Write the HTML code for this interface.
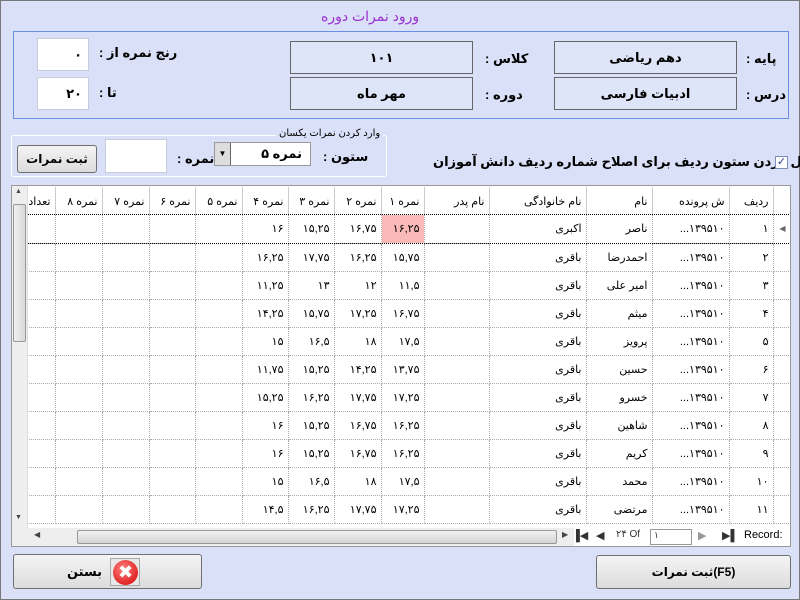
<!DOCTYPE html>
<html><head><meta charset="utf-8"><style>
*{box-sizing:border-box;margin:0;padding:0}
body{width:800px;height:600px;background:#d9e0f7;position:relative;overflow:hidden;font-family:"Liberation Sans","DejaVu Sans","Noto Sans CJK SC",sans-serif;border:1px solid #777}
.a{position:absolute}
.b{font-weight:bold;font-size:13px;color:#000}
.box{position:absolute;background:#dfe5f8;border:1px solid #666;display:flex;align-items:center;justify-content:center;font-weight:bold;font-size:13px}
.inp{position:absolute;background:#fff;border:1px solid #c8ccd8;display:flex;align-items:center;justify-content:flex-end;padding-right:6px;font-weight:bold;font-size:13px}
.lbl{position:absolute;font-weight:bold;font-size:13px;direction:rtl;white-space:nowrap}
table{border-collapse:collapse;table-layout:fixed;font-size:11px}
td{border-right:1px dotted #aaa;border-bottom:1px dotted #aaa;height:28px;text-align:right;padding-right:4px;white-space:nowrap;overflow:hidden;direction:rtl}
th{height:28px;font-weight:normal;text-align:right;padding-right:4px;border-right:1px solid #ccc;background:#fff;white-space:nowrap;overflow:hidden;direction:rtl;font-size:11px}
.btn{position:absolute;background:linear-gradient(#f4f4f4,#dcdcdc);border:1px solid #707070;border-radius:3px;display:flex;align-items:center;justify-content:center;font-weight:bold;font-size:12px}
</style></head><body>
<div class="a" style="left:320px;top:7px;color:#9b30d0;font-size:14px;direction:rtl">ورود نمرات دوره</div>
<div class="a" style="left:12px;top:30px;width:776px;height:88px;border:1px solid #6b8fe0"></div>
<div class="lbl" style="left:745px;top:50px">پایه :</div>
<div class="lbl" style="left:745px;top:86px">درس :</div>
<div class="box" style="left:553px;top:40px;width:183px;height:33px">دهم ریاضی</div>
<div class="box" style="left:553px;top:76px;width:183px;height:33px">ادبیات فارسی</div>
<div class="lbl" style="left:484px;top:50px">کلاس :</div>
<div class="lbl" style="left:484px;top:86px">دوره :</div>
<div class="box" style="left:289px;top:40px;width:183px;height:33px">۱۰۱</div>
<div class="box" style="left:289px;top:76px;width:183px;height:33px">مهر ماه</div>
<div class="lbl" style="left:98px;top:44px">رنج نمره از :</div>
<div class="lbl" style="left:98px;top:84px">تا :</div>
<div class="inp" style="left:36px;top:37px;width:52px;height:33px">۰</div>
<div class="inp" style="left:36px;top:76px;width:52px;height:33px">۲۰</div>

<div class="a" style="left:10px;top:134px;width:376px;height:42px;border:1px solid #fff;border-radius:3px"></div>
<div class="a" style="left:275px;top:127px;background:#d9e0f7;padding:0 3px;font-size:10px;direction:rtl">وارد کردن نمرات یکسان</div>
<div class="btn" style="left:16px;top:144px;width:80px;height:28px">ثبت نمرات</div>
<div class="inp" style="left:104px;top:138px;width:62px;height:34px"></div>
<div class="lbl" style="left:176px;top:150px">نمره :</div>
<div class="a" style="left:213px;top:141px;width:97px;height:24px;background:#fff;border:1px solid #999;font-weight:bold;font-size:13px;direction:rtl;padding-right:8px;line-height:22px">نمره ۵</div>
<div class="a" style="left:214px;top:142px;width:16px;height:22px;background:#ddd;border-right:1px solid #666;font-size:8px;text-align:center;line-height:22px">▼</div>
<div class="lbl" style="left:322px;top:148px">ستون :</div>
<div class="lbl" style="left:432px;top:153px">فعال کردن ستون ردیف برای اصلاح شماره ردیف دانش آموزان</div>
<div class="a" style="left:774px;top:155px;width:13px;height:13px;background:#fff;border:1px solid #7a8fb5;font-size:11px;line-height:11px;text-align:center;color:#2a3a8a">✓</div>

<div class="a" style="left:10px;top:184px;width:780px;height:362px;background:#fff;border:1px solid #999;overflow:hidden">
<table class="a" style="left:15px;top:1px;width:763px">
<colgroup><col style="width:28px"><col style="width:47px"><col style="width:47px"><col style="width:46px"><col style="width:47px"><col style="width:46px"><col style="width:46px"><col style="width:47px"><col style="width:43px"><col style="width:65px"><col style="width:97px"><col style="width:66px"><col style="width:77px"><col style="width:44px"><col style="width:17px"></colgroup>
<tr><th>تعداد</th><th>نمره ۸</th><th>نمره ۷</th><th>نمره ۶</th><th>نمره ۵</th><th>نمره ۴</th><th>نمره ۳</th><th>نمره ۲</th><th>نمره ۱</th><th>نام پدر</th><th>نام خانوادگی</th><th>نام</th><th>ش پرونده</th><th>ردیف</th><th style="border:none"></th></tr>
<tr style="outline:1px dotted #000"><td></td><td></td><td></td><td></td><td></td><td>۱۶</td><td>۱۵,۲۵</td><td>۱۶,۷۵</td><td style="background:#f9b9b9">۱۶,۲۵</td><td></td><td>اکبری</td><td>ناصر</td><td>۱۳۹۵۱۰...</td><td>۱</td><td style="font-size:8px;color:#666">◀</td></tr>
<tr><td></td><td></td><td></td><td></td><td></td><td>۱۶,۲۵</td><td>۱۷,۷۵</td><td>۱۶,۲۵</td><td>۱۵,۷۵</td><td></td><td>باقری</td><td>احمدرضا</td><td>۱۳۹۵۱۰...</td><td>۲</td><td></td></tr>
<tr><td></td><td></td><td></td><td></td><td></td><td>۱۱,۲۵</td><td>۱۳</td><td>۱۲</td><td>۱۱,۵</td><td></td><td>باقری</td><td>امیر علی</td><td>۱۳۹۵۱۰...</td><td>۳</td><td></td></tr>
<tr><td></td><td></td><td></td><td></td><td></td><td>۱۴,۲۵</td><td>۱۵,۷۵</td><td>۱۷,۲۵</td><td>۱۶,۷۵</td><td></td><td>باقری</td><td>میثم</td><td>۱۳۹۵۱۰...</td><td>۴</td><td></td></tr>
<tr><td></td><td></td><td></td><td></td><td></td><td>۱۵</td><td>۱۶,۵</td><td>۱۸</td><td>۱۷,۵</td><td></td><td>باقری</td><td>پرویز</td><td>۱۳۹۵۱۰...</td><td>۵</td><td></td></tr>
<tr><td></td><td></td><td></td><td></td><td></td><td>۱۱,۷۵</td><td>۱۵,۲۵</td><td>۱۴,۲۵</td><td>۱۳,۷۵</td><td></td><td>باقری</td><td>حسین</td><td>۱۳۹۵۱۰...</td><td>۶</td><td></td></tr>
<tr><td></td><td></td><td></td><td></td><td></td><td>۱۵,۲۵</td><td>۱۶,۲۵</td><td>۱۷,۷۵</td><td>۱۷,۲۵</td><td></td><td>باقری</td><td>خسرو</td><td>۱۳۹۵۱۰...</td><td>۷</td><td></td></tr>
<tr><td></td><td></td><td></td><td></td><td></td><td>۱۶</td><td>۱۵,۲۵</td><td>۱۶,۷۵</td><td>۱۶,۲۵</td><td></td><td>باقری</td><td>شاهین</td><td>۱۳۹۵۱۰...</td><td>۸</td><td></td></tr>
<tr><td></td><td></td><td></td><td></td><td></td><td>۱۶</td><td>۱۵,۲۵</td><td>۱۶,۷۵</td><td>۱۶,۲۵</td><td></td><td>باقری</td><td>کریم</td><td>۱۳۹۵۱۰...</td><td>۹</td><td></td></tr>
<tr><td></td><td></td><td></td><td></td><td></td><td>۱۵</td><td>۱۶,۵</td><td>۱۸</td><td>۱۷,۵</td><td></td><td>باقری</td><td>محمد</td><td>۱۳۹۵۱۰...</td><td>۱۰</td><td></td></tr>
<tr><td></td><td></td><td></td><td></td><td></td><td>۱۴,۵</td><td>۱۶,۲۵</td><td>۱۷,۷۵</td><td>۱۷,۲۵</td><td></td><td>باقری</td><td>مرتضی</td><td>۱۳۹۵۱۰...</td><td>۱۱</td><td></td></tr>
</table>
<div class="a" style="left:0;top:0;width:16px;height:342px;background:#eee;border-right:1px solid #ddd"></div>
<div class="a" style="left:1px;top:18px;width:13px;height:138px;background:linear-gradient(90deg,#f0f0f0,#d8d8d8);border:1px solid #999;border-radius:2px"></div>
<div class="a" style="left:3px;top:2px;font-size:7px;color:#444">▲</div>
<div class="a" style="left:3px;top:328px;font-size:7px;color:#444">▼</div>
<div class="a" style="left:0;top:342px;width:562px;height:18px;background:#eee"></div>
<div class="a" style="left:65px;top:344px;width:480px;height:14px;background:linear-gradient(#f0f0f0,#d5d5d5);border:1px solid #999;border-radius:2px"></div>
<div class="a" style="left:22px;top:344px;font-size:8px;color:#444">◀</div>
<div class="a" style="left:550px;top:344px;font-size:8px;color:#444">▶</div>
<div class="a" style="left:560px;top:343px;font-size:11px;color:#333;white-space:nowrap">
<span style="position:absolute;left:0">▐◀</span><span style="position:absolute;left:24px">◀</span><span style="position:absolute;left:44px;font-size:10px">۲۴ Of</span>
<span style="position:absolute;left:78px;top:0;width:42px;height:16px;border:1px solid #999;background:#fff;font-size:9px;padding-left:3px">۱</span>
<span style="position:absolute;left:126px;color:#999">▶</span><span style="position:absolute;left:150px">▶▌</span><span style="position:absolute;left:172px;color:#000">Record:</span></div>
</div>

<div class="btn" style="left:12px;top:553px;width:189px;height:35px;font-size:13px">
<span style="display:inline-block;width:30px;height:28px;background:#e8e8e8;border:1px solid #aaa;margin-right:8px;position:relative;order:2"><span style="position:absolute;left:2px;top:1px;width:25px;height:25px;border-radius:50%;background:radial-gradient(circle at 40% 35%,#ff8080,#d40000);color:#fff;font-size:18px;line-height:25px;text-align:center">✖</span></span><span style="order:1;margin-right:8px">بستن</span></div>
<div class="btn" style="left:595px;top:554px;width:195px;height:34px">ثبت نمرات(F5)</div>
</body></html>
